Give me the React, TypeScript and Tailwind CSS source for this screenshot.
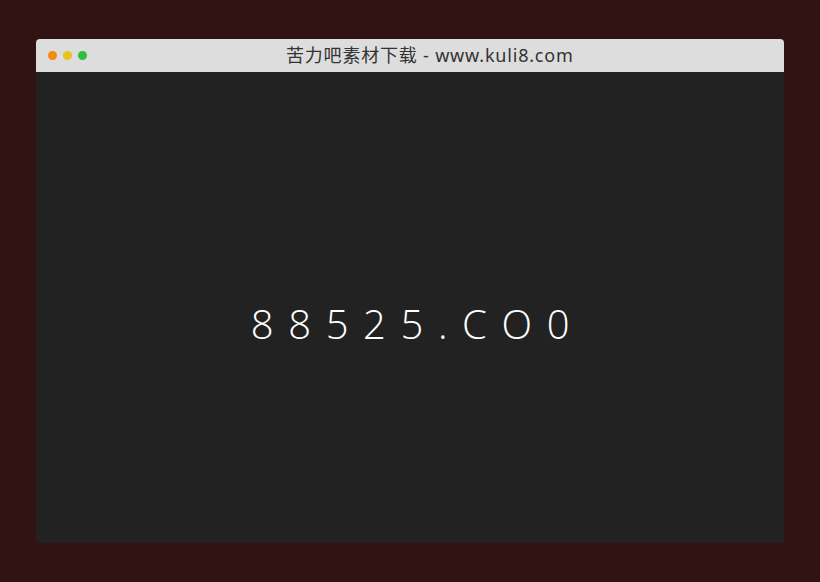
export default function App() {
  return (
    <div className="h-[582px] w-[820px] bg-[#321313] pt-[39px] pl-[36px]">
      <div className="flex h-[504px] w-[748px] flex-col overflow-hidden rounded-[4px] bg-[#222222]">
        {/* title bar */}
        <div className="flex h-[33px] items-center bg-[#dddddd] pl-[12px]">
          <div className="flex gap-[6px]">
            <span className="h-[9px] w-[9px] rounded-full bg-[#f58a12]" />
            <span className="h-[9px] w-[9px] rounded-full bg-[#e9c21d]" />
            <span className="h-[9px] w-[9px] rounded-full bg-[#2fbf3a]" />
          </div>
          <div
            className="ml-[199px] text-[18px] tracking-[0.8px] text-[#333333]"
            style={{ fontFamily: '"Noto Sans", "Noto Sans CJK SC", sans-serif' }}
          >
            苦力吧素材下载 - www.kuli8.com
          </div>
        </div>

        {/* body */}
        <div className="flex flex-1 items-center justify-center pt-[32px]">
          <div
            className="pl-[15px] text-[40px] font-light tracking-[14.6px] text-white"
            style={{ fontFamily: '"Open Sans", sans-serif' }}
          >
            88525.CO0
          </div>
        </div>
      </div>
    </div>
  );
}
